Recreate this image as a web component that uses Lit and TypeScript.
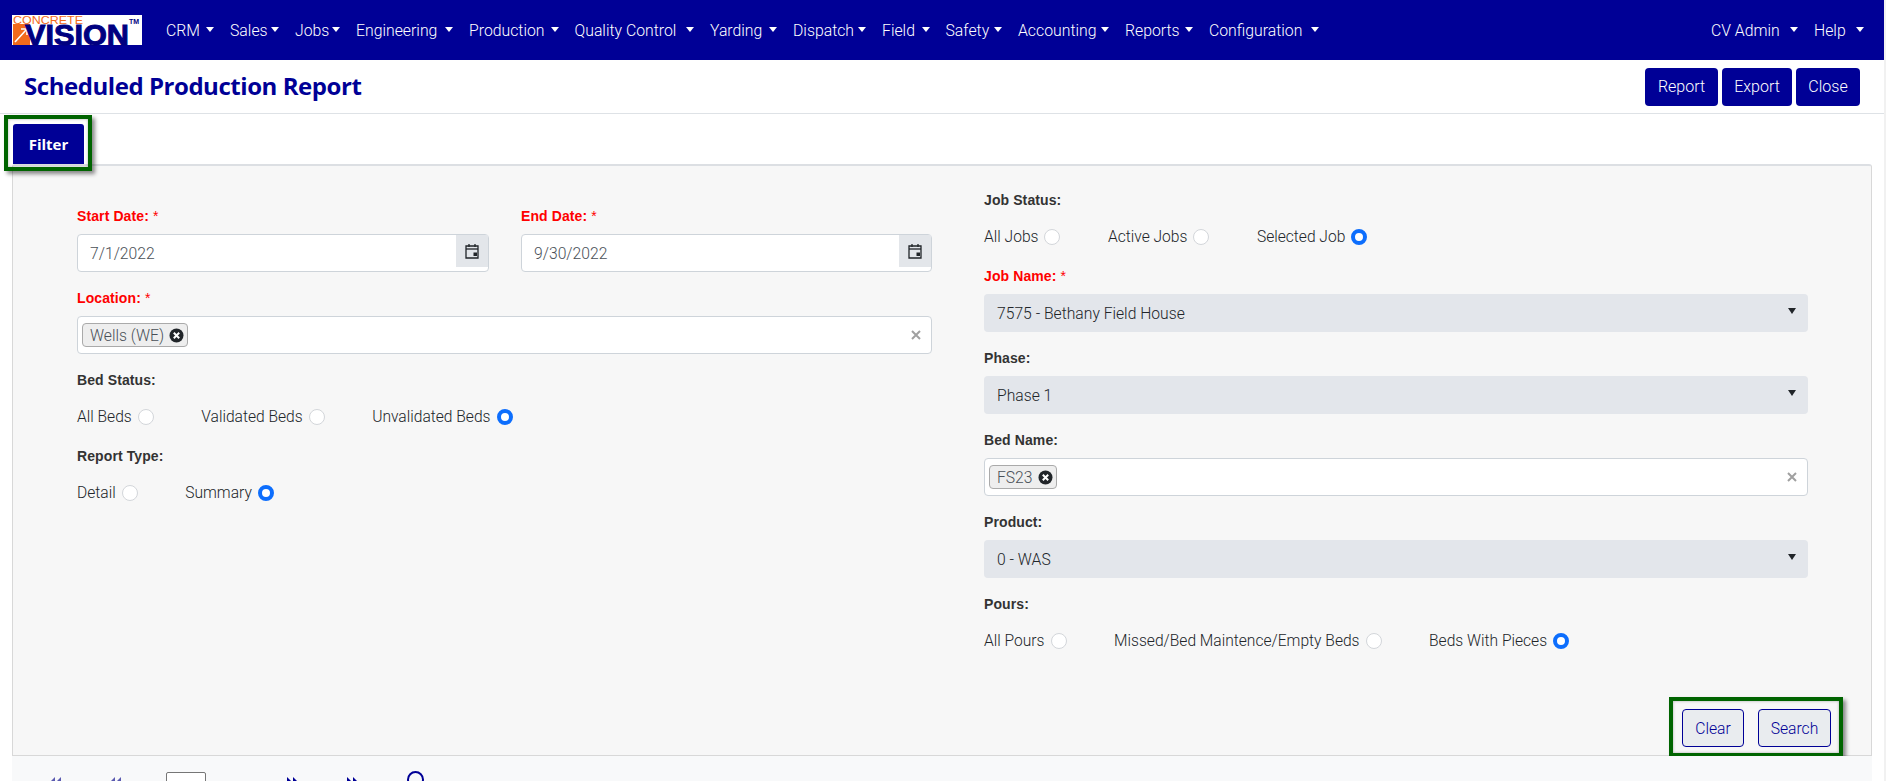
import { LitElement, html, css, svg } from "lit";
import { customElement } from "lit/decorators.js";

const NAV: [string, number][] = [["CRM",64],["Sales",65],["Jobs",61],["Engineering",113],["Production",105.5],["Quality Control",135.5],["Yarding",83],["Dispatch",89],["Field",63.5],["Safety",72.5],["Accounting",107],["Reports",84],["Configuration",126]];

const calendar = html`<svg width="16" height="16" viewBox="0 0 16 16"><path d="M2 3h12v12H2z" fill="none" stroke="#212529" stroke-width="1.3"/><path d="M2 6h12" stroke="#212529" stroke-width="1.3"/><path d="M5 1v3M11 1v3" stroke="#212529" stroke-width="1.3"/><rect x="9.5" y="9.5" width="3.5" height="3.5" fill="#212529"/></svg>`;

const tagX = html`<svg class="tagx" width="15" height="15" viewBox="0 0 15 15"><circle cx="7.5" cy="7.5" r="7" fill="#212529"/><path d="M4.8 4.8l5.4 5.4M10.2 4.8l-5.4 5.4" stroke="#fff" stroke-width="2"/></svg>`;

const clearX = html`<svg class="clearx" width="10" height="10" viewBox="0 0 10 10"><path d="M1 1l8 8M9 1l-8 8" stroke="#a0a0a0" stroke-width="2"/></svg>`;

const first = svg`<path d="M1 6l6-6v12zM7 6l6-6v12z"/>`;

@customElement("app-root")
export class AppRoot extends LitElement {
  static styles = css`
    :host { display: flex; width: 100%; height: 100vh; overflow: hidden; background: #fff; font-family: Roboto, "Liberation Sans", sans-serif; font-size: 15.7px; font-weight: 300; color: #212529; }
    * { box-sizing: border-box; }
    .main { width: 1884px; flex: none; display: flex; flex-direction: column; }
    .strip { flex: 1; background: #f1f1f1; }
    nav { height: 60px; background: #000096; display: flex; align-items: center; padding-left: 12px; color: #fff; flex: none; }
    .logo { flex: none; margin-right: 16px; display: block; overflow: visible; }
    .logo-text { font-family: "Liberation Sans", sans-serif; }
    .items { display: flex; flex: 1; }
    .item { display: flex; align-items: center; padding: 1px 8px 0; white-space: nowrap; line-height: 22px; font-size: 15.8px; flex: none; }
    .caret { width: 0; height: 0; border-left: 4.75px solid transparent; border-right: 4.75px solid transparent; border-top: 5px solid #fff; margin-left: auto; margin-top: -3px; }
    .right-items { display: flex; margin-right: 12px; }
    header { height: 54px; border-bottom: 1px solid #dee2e6; display: flex; align-items: center; justify-content: space-between; padding: 0 24px; flex: none; }
    h1 { margin: 0 0 2px; font-size: 24px; font-weight: 700; color: #000096; font-family: "Open Sans", sans-serif; letter-spacing: -0.45px; }
    .actions { display: flex; gap: 4px; }
    .btn { height: 38px; border: 0; border-radius: 4px; background: #000096; color: #fff; font: inherit; font-size: 16px; padding: 0; display: flex; align-items: center; justify-content: center; }
    .tabs { height: 50px; padding: 10px 0 0 13px; flex: none; }
    .tab-wrap { position: relative; width: 71px; height: 40px; }
    .tab { width: 71px; height: 40px; background: #000096; color: #fff; font-weight: 700; font-size: 15px; font-family: "Open Sans", sans-serif; display: flex; align-items: center; justify-content: center; border-radius: 3px 3px 0 0; }
    .mark { position: absolute; border: 4px solid #006400; box-shadow: 3px 3px 4px rgba(0,0,0,.45), inset 0 0 3px rgba(0,0,0,.3); pointer-events: none; }
    .tab-wrap .mark { inset: -9px -8px -7px -9px; }
    .panel { margin: 0 12px; background: #f7f7f7; border: 1px solid #d8d8d8; border-top: 2px solid #dcdfe3; border-radius: 3px 3px 0 0; padding-left: 64px; flex: none; height: 592px; }
    .cols { display: grid; grid-template-columns: 855px 824px; column-gap: 52px; }
    .left { padding-top: 41px; }
    .right { padding-top: 25px; }
    .dates { display: grid; grid-template-columns: 412px 411px; column-gap: 32px; }
    .field { margin-bottom: 17px; }
    label.lbl { display: block; font-family: "Liberation Sans", Arial, sans-serif; font-weight: 700; font-size: 14px; letter-spacing: .1px; line-height: 18px; margin-bottom: 9px; color: #333; }
    label.req { color: #f00; }
    label.req span { font-weight: 400; margin-left: 4px; }
    .input { height: 38px; background: #fff; border: 1px solid #ced4da; border-radius: 4px; display: flex; align-items: center; position: relative; color: #495057; padding-left: 12px; }
    .addon { position: absolute; top: 0; right: 0; width: 32px; height: 32px; background: #e3e6ea; display: flex; align-items: center; justify-content: center; }
    .multi { padding-left: 4px; }
    .tag { height: 24px; border: 1px solid #aaa; border-radius: 4px; background: #eee; display: flex; align-items: center; gap: 5px; padding: 0 3px 0 7px; color: #495057; }
    .clearx { position: absolute; right: 10px; top: 13px; }
    .select { height: 38px; background: #e3e6eb; border-radius: 4px; display: flex; align-items: center; padding-left: 13px; position: relative; color: #212529; }
    .select::after { content: ""; position: absolute; right: 12px; top: 14px; border-left: 4px solid transparent; border-right: 4px solid transparent; border-top: 6px solid #212529; }
    .radios { display: flex; gap: 47.5px; height: 20px; margin-top: 18px; margin-bottom: 20px; align-items: center; font-size: 15.6px; }
    .radio { display: flex; align-items: center; gap: 6px; white-space: nowrap; color: #212529; }
    .dot { width: 16px; height: 16px; border-radius: 50%; background: #fff; border: 1px solid #d3d6da; flex: none; }
    .dot.on { border: 4.5px solid #0d6efd; }
    .foot { display: flex; justify-content: flex-end; margin-top: 38px; padding-right: 40px; }
    .foot-wrap { position: relative; display: flex; gap: 14px; }
    .foot-wrap .mark { inset: -12px -12px -10px -13px; }
    .ghost { height: 38px; background: #e9ecef; border: 1.5px solid #000096; border-radius: 4px; color: #000096; display: flex; align-items: center; justify-content: center; }
    .pager { margin: 0 12px; flex: 1; background: #f8f9fa; display: flex; align-items: flex-start; position: relative; padding: 16px 0 0 36px; }
    .pg { fill: #000096; display: block; }
    .pg.off { fill: #5a5ab0; }
    .pageno { width: 40px; height: 30px; background: #fff; border: 1px solid #767676; border-radius: 2px; }
    .search { width: 17px; height: 17px; border: 2px solid #000096; border-radius: 50%; }
  `;

  private nav(label: string, width: number) {
    return html`<div class="item" style="width:${width}px">${label}<span class="caret"></span></div>`;
  }
  private radios(opts: string[], on: number) {
    return html`<div class="radios">${opts.map((o, i) => html`<div class="radio">${o}<span class="dot ${i === on ? "on" : ""}"></span></div>`)}</div>`;
  }
  private lbl(text: string, req = false) {
    return html`<label class="lbl ${req ? "req" : ""}">${text}${req ? html`<span>*</span>` : ""}</label>`;
  }
  private logo() {
    return html`<svg class="logo" width="130" height="30" viewBox="0 0 130 30">
      <rect width="130" height="30" fill="#fff"/>
      <rect x="1" y="9" width="17" height="21" fill="#f26a1b"/>
      <path d="M3 27L14 15M9 14h6v6" fill="none" stroke="#fff" stroke-width="1.6"/>
      <text class="logo-text" x="1" y="8.5" font-size="10.5" fill="#f26a1b" textLength="70" lengthAdjust="spacingAndGlyphs">CONCRETE</text>
      <text class="logo-text" x="13" y="30" font-size="29" font-weight="700" fill="#000080" stroke="#000080" stroke-width="1" textLength="104" lengthAdjust="spacingAndGlyphs">VISION</text>
      <text class="logo-text" x="117" y="9" font-size="7" font-weight="700" fill="#000080">TM</text>
    </svg>`;
  }
  render() {
    return html`
    <div class="main">
      <nav>
        ${this.logo()}
        <div class="items">${NAV.map(([n, w]) => this.nav(n, w))}</div>
        <div class="right-items">${this.nav("CV Admin", 103)}${this.nav("Help", 66)}</div>
      </nav>
      <header>
        <h1>Scheduled Production Report</h1>
        <div class="actions">
          <div class="btn" style="width:73px">Report</div>
          <div class="btn" style="width:70px">Export</div>
          <div class="btn" style="width:64px">Close</div>
        </div>
      </header>
      <div class="tabs"><div class="tab-wrap"><div class="tab">Filter</div><div class="mark"></div></div></div>
      <section class="panel">
        <div class="cols">
          <div class="left">
            <div class="dates">
              <div class="field">${this.lbl("Start Date:", true)}<div class="input">7/1/2022<div class="addon">${calendar}</div></div></div>
              <div class="field">${this.lbl("End Date:", true)}<div class="input">9/30/2022<div class="addon">${calendar}</div></div></div>
            </div>
            <div class="field">${this.lbl("Location:", true)}<div class="input multi"><div class="tag">Wells (WE) ${tagX}</div>${clearX}</div></div>
            <div class="field">${this.lbl("Bed Status:")}${this.radios(["All Beds", "Validated Beds", "Unvalidated Beds"], 2)}</div>
            <div class="field">${this.lbl("Report Type:")}${this.radios(["Detail", "Summary"], 1)}</div>
          </div>
          <div class="right">
            <div class="field">${this.lbl("Job Status:")}${this.radios(["All Jobs", "Active Jobs", "Selected Job"], 2)}</div>
            <div class="field">${this.lbl("Job Name:", true)}<div class="select">7575 - Bethany Field House</div></div>
            <div class="field">${this.lbl("Phase:")}<div class="select">Phase 1</div></div>
            <div class="field">${this.lbl("Bed Name:")}<div class="input multi"><div class="tag">FS23 ${tagX}</div>${clearX}</div></div>
            <div class="field">${this.lbl("Product:")}<div class="select">0 - WAS</div></div>
            <div class="field">${this.lbl("Pours:")}${this.radios(["All Pours", "Missed/Bed Maintence/Empty Beds", "Beds With Pieces"], 2)}</div>
          </div>
        </div>
        <div class="foot"><div class="foot-wrap">
          <div class="ghost" style="width:62px">Clear</div>
          <div class="ghost" style="width:73px">Search</div>
          <div class="mark"></div>
        </div></div>
      </section>
      <div class="pager">
        <svg class="pg off" style="margin-top:5px" width="14" height="12" viewBox="0 0 14 12">${first}</svg>
        <svg class="pg off" style="margin:5px 0 0 46px" width="14" height="12" viewBox="0 0 14 12">${first}</svg>
        <div class="pageno" style="margin-left:44px"></div>
        <svg class="pg" style="margin:5px 0 0 80px;transform:scaleX(-1)" width="14" height="12" viewBox="0 0 14 12">${first}</svg>
        <svg class="pg" style="margin:5px 0 0 46px;transform:scaleX(-1)" width="14" height="12" viewBox="0 0 14 12">${first}</svg>
        <div class="search" style="margin:-1px 0 0 47px"></div>
      </div>
    </div>
    <div class="strip"></div>`;
  }
}
